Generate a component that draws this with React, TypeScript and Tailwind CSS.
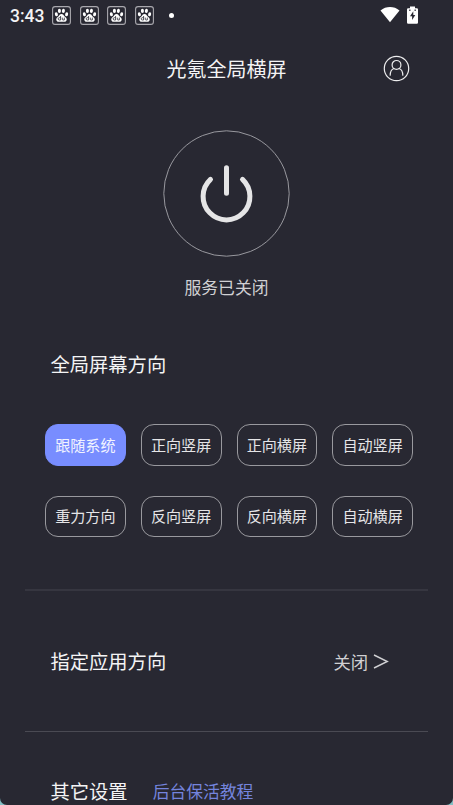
const directions = [
  ['跟随系统', '正向竖屏', '正向横屏', '自动竖屏'],
  ['重力方向', '反向竖屏', '反向横屏', '自动横屏'],
];

function Paw() {
  return (
    <svg width="19" height="19" viewBox="0 0 19 19" fill="none">
      <rect x="0.6" y="0.6" width="17.8" height="17.8" rx="2.5" stroke="#a9a8ae" strokeWidth="1.1" />
      <g fill="#fff">
        <ellipse cx="4.4" cy="8.3" rx="1.5" ry="2" transform="rotate(-15 4.4 8.3)" />
        <ellipse cx="7.4" cy="4.9" rx="1.55" ry="2.1" />
        <ellipse cx="11.4" cy="4.9" rx="1.55" ry="2.1" transform="rotate(8 11.4 4.9)" />
        <ellipse cx="14.6" cy="8.3" rx="1.5" ry="2" transform="rotate(15 14.6 8.3)" />
        <path d="M9.5 7.9c1.7 0 2.2 1.4 3.2 2.5 1.1 1.1 2.4 1.9 2 3.7-.4 1.8-2.1 1.9-3.4 1.7-1.2-.2-2.4-.2-3.6 0-1.3.2-3 .1-3.4-1.7-.4-1.8.9-2.6 2-3.7 1-1.1 1.5-2.5 3.2-2.5z" />
      </g>
      <path d="M8.6 10v4H7.3a1.1 1.1 0 0 1 0-2.3h1.3M10.3 11.6v1.6q0 .8.8.8h1.2v-2.4" stroke="#282832" strokeWidth="0.8" />
    </svg>
  );
}

function StatusBar() {
  return (
    <div className="flex h-8 items-center pl-[10px] pr-[35px]">
      <span className="w-[42px] font-[Roboto,sans-serif] text-[17.5px] leading-8 font-medium whitespace-nowrap">3:43</span>
      <div className="mt-[-1px] flex gap-[8.7px]">
        <Paw />
        <Paw />
        <Paw />
        <Paw />
      </div>
      <span className="mt-[-2px] ml-[15px] size-[5px] rounded-full bg-white" />
      <div className="mt-[-3px] ml-auto flex items-center gap-[7px]">
        <svg width="20" height="17" viewBox="0 0 20 17" fill="#fff">
          <path d="M.5 4.4C6-.1 14 -.1 19.5 4.4L10 16.2z" />
        </svg>
        <svg width="11" height="18" viewBox="0 0 11 18">
          <path d="M3 0.5h5v1.8h1.8q1.2 0 1.2 1.2v13q0 1.2-1.2 1.2H1.2Q0 17.7 0 16.5v-13q0-1.2 1.2-1.2H3z" fill="#fff" />
          <path d="M6.3 5.2 3 10.2h2.1v3.8l3.2-5.1H6.3z" fill="#282832" />
          <path d="M2 3.6h1.6v1.5H2zM7.4 3.6H9v1.5H7.4z" fill="#282832" opacity="0.75" />
        </svg>
      </div>
    </div>
  );
}

export default function App() {
  return (
    <div className="h-[805px] w-full overflow-hidden bg-[#83c0c5]">
      <main className="flex h-full flex-col overflow-hidden rounded-b-[7px] bg-[#282832] font-['Noto_Sans_CJK_SC',sans-serif] text-[#f4f4f5]">
        <StatusBar />
        <header className="grid h-[74px] shrink-0 grid-cols-[1fr_auto_1fr] items-center pr-[43px] pl-[43px]">
          <span />
          <h1 className="text-[20px] leading-[74px]">光氪全局横屏</h1>
          <svg className="mb-px justify-self-end" width="27" height="27" viewBox="0 0 27 27" fill="none" stroke="#ededee" strokeWidth="1.2" strokeLinecap="round">
            <circle cx="13.5" cy="13.5" r="12.2" />
            <circle cx="13.5" cy="9.9" r="4.4" />
            <path d="M7.2 20.2c0-3.4 1.2-5.8 3.8-6.7M19.8 20.2c0-3.4-1.2-5.8-3.8-6.7" />
          </svg>
        </header>

        <section className="flex shrink-0 flex-col items-center pt-6">
          <svg width="127" height="127" viewBox="0 0 127 127" fill="none">
            <circle cx="63.5" cy="63.5" r="62.7" stroke="#a5a5aa" strokeWidth="0.9" />
            <path d="M47.5 49.4A23.4 23.4 0 1 0 79.5 49.4M63.5 37.7v25.5" stroke="#e5e5e6" strokeWidth="5" strokeLinecap="round" />
          </svg>
          <p className="mt-[17px] text-[16.8px] leading-[26px] text-[#d0d0d3]">服务已关闭</p>
        </section>

        <section className="shrink-0 pt-[50px]">
          <h2 className="ml-[50.5px] text-[19.3px] leading-[28px]">全局屏幕方向</h2>
          <div className="mt-[46px] ml-[45px] flex w-[368px] flex-col gap-[30px]">
            {directions.map((row, rowIndex) => (
              <div key={row[0]} className="grid grid-cols-4 gap-x-[15px]">
                {row.map((label) => (
                  <button
                    key={label}
                    className={`h-[41.5px] rounded-[13px] border text-[15.1px] whitespace-nowrap ${
                      rowIndex === 1 ? 'pb-[2px]' : ''
                    } ${
                      label === '跟随系统' ? 'border-[#788dff] bg-[#788dff] text-[#f1f3ff]' : 'border-[#99999e] text-[#e5e5e7]'
                    }`}
                  >
                    {label}
                  </button>
                ))}
              </div>
            ))}
          </div>
        </section>

        <div className="mt-[52px] mr-[25px] ml-[25px] h-[2px] shrink-0 bg-[#363640]" />
        <section className="flex h-[140px] shrink-0 items-center justify-between pt-px pr-[64px] pl-[50.5px]">
          <h2 className="text-[19.3px]">指定应用方向</h2>
          <div className="flex items-center gap-[5px] text-[#d0d0d3]">
            <span className="text-[17.3px]">关闭</span>
            <svg width="16" height="15" viewBox="0 0 16 15" fill="none" stroke="currentColor" strokeWidth="1.4">
              <path d="M1 1 14.3 7.5 1 14" />
            </svg>
          </div>
        </section>
        <div className="mr-[25px] ml-[25px] h-px shrink-0 bg-[#4a4a53]" />
        <section className="flex shrink-0 items-center gap-[25px] pt-[45px] pl-[50.5px]">
          <h2 className="text-[19.3px] leading-[29px]">其它设置</h2>
          <span className="text-[16.8px] leading-[29px] text-[#7484dd]">后台保活教程</span>
        </section>
      </main>
    </div>
  );
}
